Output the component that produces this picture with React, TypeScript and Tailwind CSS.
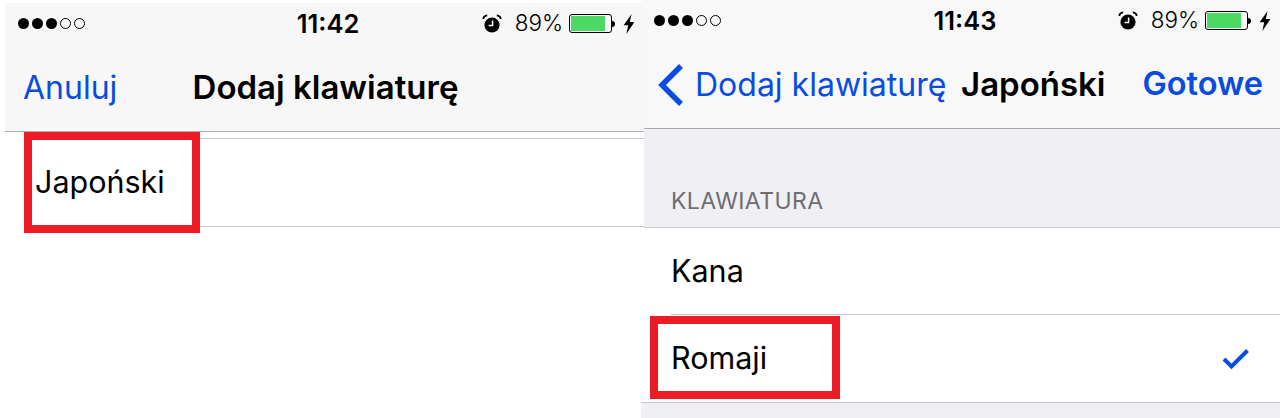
function Dots() {
  return (
    <div className="flex gap-[3px]">
      {[0, 1, 2].map((i) => (
        <span key={i} className="w-[11px] h-[11px] rounded-full bg-black" />
      ))}
      {[3, 4].map((i) => (
        <span key={i} className="w-[11px] h-[11px] rounded-full border border-black" />
      ))}
    </div>
  );
}

function Alarm() {
  return (
    <svg width="20" height="20" viewBox="0 0 20 20" className="shrink-0">
      <circle cx="10" cy="11" r="7.6" fill="#000" />
      <path d="M1.2 5 C1.6 2.8 3.2 1.6 5.2 1.4 M18.8 5 C18.4 2.8 16.8 1.6 14.8 1.4" stroke="#000" strokeWidth="1.7" fill="none" />
      <path d="M10.6 6.6 V11.4 H6.6" stroke="#fff" strokeWidth="1.5" fill="none" />
    </svg>
  );
}

function Battery() {
  return (
    <div className="flex items-center shrink-0">
      <div className="w-[43px] h-[19px] border border-black rounded-[3px] p-[1px] pr-[6px] flex">
        <div className="flex-1 bg-[#4cd964]" />
      </div>
      <div className="w-[3px] h-[6px] bg-black rounded-r-[3px]" />
    </div>
  );
}

function Bolt() {
  return (
    <svg width="12" height="20" viewBox="0 0 12 20" className="shrink-0 block">
      <path d="M8.6 0 L0.6 11.2 H5.2 L3.4 20 L11.4 8 H6.8 Z" fill="#000" />
    </svg>
  );
}

function StatusBar({ time, timeClass }: { time: string; timeClass: string }) {
  return (
    <div className="relative flex items-center justify-between h-[41px]">
      <Dots />
      <span className={`absolute left-0 right-0 text-center text-[25.5px] font-semibold text-black leading-none pointer-events-none ${timeClass}`}>{time}</span>
      <div className="flex items-center">
        <Alarm />
        <span className="ml-[13px] mr-[6px] text-[22.5px] font-light text-black leading-none">89%</span>
        <Battery />
        <span className="ml-[8px]"><Bolt /></span>
      </div>
    </div>
  );
}

function RedBox({ className }: { className: string }) {
  return <div className={`absolute z-20 border-[8px] border-[#ed1c24] ${className}`} />;
}

export default function App() {
  return (
    <div className="relative flex items-start w-[1280px] h-[418px] overflow-hidden bg-white text-black font-['Inter','Liberation_Sans',sans-serif]">
      <div className="relative z-10 w-[644px] -mr-[3px] pl-[5px] pt-[3px] shrink-0">
        <div className="bg-[#f7f7f7] border-b border-[#b2b2b2] h-[129px] pl-[13px] pr-[9px]">
          <StatusBar time="11:42" timeClass="pl-[3px]" />
          <div className="relative h-[87px] flex items-center">
            <span className="pl-[5px] text-[32px] text-[#0a4be0] leading-none">Anuluj</span>
            <span className="absolute left-0 right-0 text-center text-[33px] font-semibold leading-none pr-[2px]">Dodaj klawiaturę</span>
          </div>
        </div>
        <div className="bg-white pt-[6px] pb-px">
          <div className="ml-[19px] h-[89px] border-y border-[#c8c7cc] flex items-center pl-[11px] text-[30.5px] leading-none">Japoński</div>
        </div>
      </div>
      <div className="flex-1 h-full flex flex-col">
        <div className="bg-[#f8f8f8] border-b border-[#a9a9ae] h-[129px] pl-[13px] pr-[9px]">
          <StatusBar time="11:43" timeClass="pl-[5px]" />
          <div className="relative h-[87px] flex items-center justify-between pr-[8px]">
            <div className="flex items-center text-[#0a4be0]">
              <svg width="26" height="44" viewBox="0 0 26 44" className="shrink-0 ml-[3px]">
                <path d="M24 3 L5 22 L24 41" stroke="#0a4be0" strokeWidth="5.5" fill="none" />
              </svg>
              <span className="ml-[12px] text-[32px] leading-none">Dodaj klawiaturę</span>
            </div>
            <span className="absolute left-[307px] text-[33px] font-semibold leading-none">Japoński</span>
            <span className="text-[32.5px] font-semibold text-[#0a4be0] leading-none">Gotowe</span>
          </div>
        </div>
        <div className="bg-[#efeff4] border-b border-[#c8c7cc] h-[99px] flex items-end pb-[14px] pl-[30px] text-[23px] tracking-[0.4px] text-[#6d6d72] leading-none">KLAWIATURA</div>
        <div className="h-[86px] pl-[30px] flex items-center text-[30.5px] leading-none">Kana</div>
        <div className="h-[89px] border-b border-[#c8c7cc]">
          <div className="h-full ml-[30px] pr-[30px] border-t border-[#c8c7cc] flex items-center justify-between text-[30.5px] leading-none">
            <span>Romaji</span>
            <svg width="28" height="22" viewBox="0 0 28 22" className="shrink-0">
              <path d="M2 11 L9.5 18.5 L25.5 2.5" stroke="#0a4be0" strokeWidth="4" fill="none" />
            </svg>
          </div>
        </div>
        <div className="flex-1 bg-[#efeff4]" />
      </div>
      <RedBox className="left-[24px] top-[132px] w-[176px] h-[101px]" />
      <RedBox className="left-[650px] top-[316px] w-[190px] h-[83px]" />
    </div>
  );
}
